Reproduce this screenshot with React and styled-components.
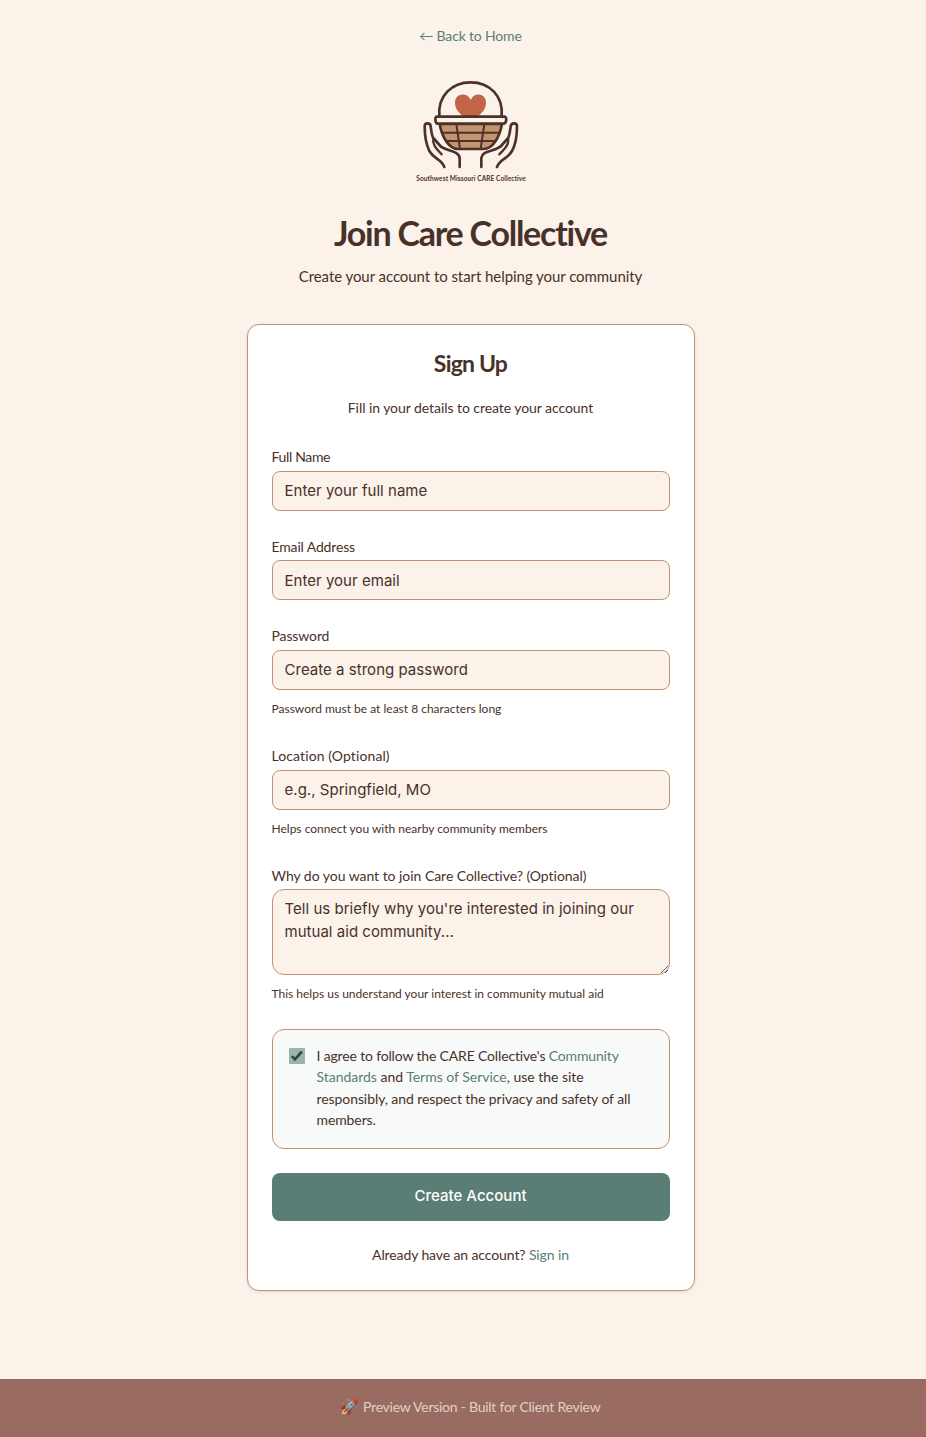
import React from "react";
import styled, { createGlobalStyle } from "styled-components";

const ink = "#483129";
const cream = "#fbf2e9";
const sage = "#5a7d75";
const clay = "#c39171";
const humanist = `Lato, "Open Sans", sans-serif`;
const ui = `Inter, "Liberation Sans", sans-serif`;

const GlobalStyle = createGlobalStyle`
  *, *::before, *::after { box-sizing: border-box; }
  html, body { margin: 0; padding: 0; background: ${cream}; }
  body {
    color: ${ink};
    font-family: ${humanist};
    font-variant-ligatures: none;
    overflow: hidden;
  }
`;

const Page = styled.div`
  display: flex;
  flex-direction: column;
  height: 1437px;
  overflow: hidden;
`;

const Main = styled.main`
  flex: 1;
  display: flex;
  flex-direction: column;
  align-items: center;
  padding: 25px 0 0 15px;
`;

const TextLink = styled.a`
  color: ${sage};
  text-decoration: none;
`;

const BackLink = styled(TextLink)`
  font-size: 14px;
  line-height: 22px;
  white-space: nowrap;
  letter-spacing: -0.17px;
`;

const Logo = styled.svg`
  display: block;
  width: 130px;
  height: 120px;
  margin: 23px 1px 0 0;
`;

const PageTitle = styled.h1`
  margin: 21px 0 0;
  font-size: 34px;
  line-height: 44px;
  font-weight: 700;
  letter-spacing: -1.25px;
  white-space: nowrap;
`;

const Tagline = styled.p`
  margin: 9px 0 0;
  font-size: 15px;
  line-height: 24px;
  letter-spacing: -0.06px;
  white-space: nowrap;
`;

const Card = styled.section`
  width: 448px;
  margin-top: 36px;
  padding: 24px;
  background: #fff;
  border: 1px solid ${clay};
  border-radius: 12px;
  box-shadow: 0 1px 3px rgba(72, 49, 41, 0.14);
`;

const CardTitle = styled.h2`
  margin: 0;
  font-size: 23px;
  line-height: 29px;
  font-weight: 700;
  letter-spacing: -0.8px;
  text-align: center;
`;

const CardIntro = styled.p`
  margin: 18px 0 25.2px;
  font-size: 14px;
  line-height: 24px;
  letter-spacing: -0.06px;
  text-align: center;
`;

const Form = styled.form`
  display: flex;
  flex-direction: column;
  gap: 24px;
`;

const Field = styled.div`
  display: flex;
  flex-direction: column;
`;

const Label = styled.label`
  margin-bottom: 2px;
  font-size: 14px;
  line-height: 23.6px;
  letter-spacing: ${(p) => p.$track || "0"};
`;

const Hint = styled.p`
  margin: 8px 0 0.5px;
  font-size: 12px;
  line-height: 21.6px;
`;

const Input = styled.input`
  width: 100%;
  height: 40px;
  padding: 0 12px;
  color: ${ink};
  background: ${cream};
  border: 1px solid ${clay};
  border-radius: 8px;
  font-family: ${ui};
  font-size: 15px;
  letter-spacing: 0.03px;
  outline: none;
  &::placeholder { color: ${ink}; opacity: 1; }
`;

const TextArea = styled.textarea`
  display: block;
  width: 100%;
  height: 85.5px;
  padding: 8px 12px;
  color: ${ink};
  background: ${cream};
  border: 1px solid ${clay};
  border-radius: 12px;
  font-family: ${ui};
  font-size: 15px;
  line-height: 22.75px;
  letter-spacing: 0.03px;
  resize: vertical;
  outline: none;
  &::placeholder { color: ${ink}; opacity: 1; }
`;

const Agreement = styled.div`
  display: flex;
  align-items: flex-start;
  gap: 12px;
  height: 120px;
  padding: 16px;
  background: #f8faf9;
  border: 1px solid ${clay};
  border-radius: 12px;
`;

const CheckBox = styled.span`
  flex: none;
  display: block;
  width: 16px;
  height: 16px;
  margin-top: 2px;
  background: #98b5af;
  border-radius: 1px;
  svg { display: block; width: 16px; height: 16px; }
`;

const AgreementText = styled.p`
  margin: -1.2px 0 0;
  font-size: 14px;
  line-height: 21.4px;
`;

const Line = styled.span`
  display: block;
  white-space: nowrap;
  letter-spacing: ${(p) => p.$track || "0"};
`;

const Submit = styled.button`
  height: 48px;
  padding: 0 0 2px;
  color: #fff;
  background: ${sage};
  border: 0;
  border-radius: 8px;
  font-family: ${ui};
  font-size: 15px;
  font-weight: 500;
  letter-spacing: 0.03px;
`;

const SignIn = styled.p`
  margin: -1px 0 1px;
  font-size: 14px;
  line-height: 21px;
  letter-spacing: -0.11px;
  text-align: center;
`;

const Footer = styled.footer`
  display: flex;
  align-items: center;
  justify-content: center;
  height: 58px;
  padding: 0 0 3px 15px;
  color: #e1d0c8;
  background: #9a6b61;
  font-size: 14px;
  letter-spacing: -0.25px;
  white-space: nowrap;
`;

const Rocket = styled.span`
  margin-right: 4px;
  font-family: "Noto Color Emoji", sans-serif;
  font-size: 15px;
  opacity: 0.85;
`;

function CareLogo() {
  return (
    <Logo viewBox="0 0 390 360" fill="none" stroke="#4b322b" strokeWidth="8" strokeLinecap="round" strokeLinejoin="round">
      <path d="M103 138C98 78 140 37 197 37s98 41 93 101" />
      <path d="M174 138C160 127 150 115 150 98c0-28 36-33 47-8 11-25 46-20 46 8 0 17-10 29-24 40Z" fill="#c06546" stroke="none" />
      <path d="M104 162c7 41 29 75 55 75h76c28 0 48-33 56-75Z" fill="#c5956f" />
      <path d="M113 188h170M124 213h147M154 163l11 73M238 163l-11 73" strokeWidth="6" />
      <path d="M95 140h204c7 0 6 19-2 21H98c-8-1-9-21-3-21Z" fill={cream} />
      <path d="M118 291c-8-24-31-23-45-48-11-23-14-50-14-74 0-12 17-12 18 0 2 15 3 27 8 36l23 25c20 15 53 11 56 34v27" />
      <path d="M85 205c-4 18 8 30 25 48M108 230l-20-24" strokeWidth="7" />
      <path d="M276 291c8-24 31-23 45-48 13-23 15-50 15-74 0-12-17-12-19 0-2 15-3 27-8 36l-23 25c-22 16-54 11-57 34v27" />
      <path d="M309 205c4 18-9 30-26 48M287 230l20-24" strokeWidth="7" />
      <text x="34" y="333" textLength="328" fill="#4b322b" stroke="none" fontFamily={humanist} fontSize="19.5" fontWeight="700">
        Southwest Missouri CARE Collective
      </text>
    </Logo>
  );
}

export default function App() {
  return (
    <Page>
      <GlobalStyle />
      <Main>
        <BackLink>← Back to Home</BackLink>
        <CareLogo />
        <PageTitle>Join Care Collective</PageTitle>
        <Tagline>Create your account to start helping your community</Tagline>
        <Card>
          <CardTitle>Sign Up</CardTitle>
          <CardIntro>Fill in your details to create your account</CardIntro>
          <Form onSubmit={(e) => e.preventDefault()}>
            <Field>
              <Label htmlFor="name" $track="-0.35px">Full Name</Label>
              <Input id="name" placeholder="Enter your full name" />
            </Field>
            <Field>
              <Label htmlFor="email" $track="-0.15px">Email Address</Label>
              <Input id="email" type="email" placeholder="Enter your email" />
            </Field>
            <Field>
              <Label htmlFor="password" $track="-0.12px">Password</Label>
              <Input id="password" type="password" placeholder="Create a strong password" />
              <Hint>Password must be at least 8 characters long</Hint>
            </Field>
            <Field>
              <Label htmlFor="location" $track="0.1px">Location (Optional)</Label>
              <Input id="location" placeholder="e.g., Springfield, MO" />
              <Hint>Helps connect you with nearby community members</Hint>
            </Field>
            <Field>
              <Label htmlFor="reason" $track="-0.04px">Why do you want to join Care Collective? (Optional)</Label>
              <TextArea id="reason" placeholder="Tell us briefly why you're interested in joining our mutual aid community..." />
              <Hint>This helps us understand your interest in community mutual aid</Hint>
            </Field>
            <Agreement>
              <CheckBox role="checkbox" aria-checked="true">
                <svg viewBox="0 0 16 16" fill="none" stroke="#3d3f3f" strokeWidth="2.6">
                  <path d="M2.8 8.2 6 11.4 12.8 3.6" />
                </svg>
              </CheckBox>
              <AgreementText>
                <Line $track="-0.16px">I agree to follow the CARE Collective's <TextLink>Community</TextLink></Line>
                <Line $track="-0.02px"><TextLink>Standards</TextLink> and <TextLink>Terms of Service</TextLink>, use the site</Line>
                <Line $track="-0.08px">responsibly, and respect the privacy and safety of all</Line>
                <Line $track="-0.1px">members.</Line>
              </AgreementText>
            </Agreement>
            <Submit>Create Account</Submit>
            <SignIn>Already have an account? <TextLink>Sign in</TextLink></SignIn>
          </Form>
        </Card>
      </Main>
      <Footer><Rocket>🚀</Rocket>Preview Version - Built for Client Review</Footer>
    </Page>
  );
}
